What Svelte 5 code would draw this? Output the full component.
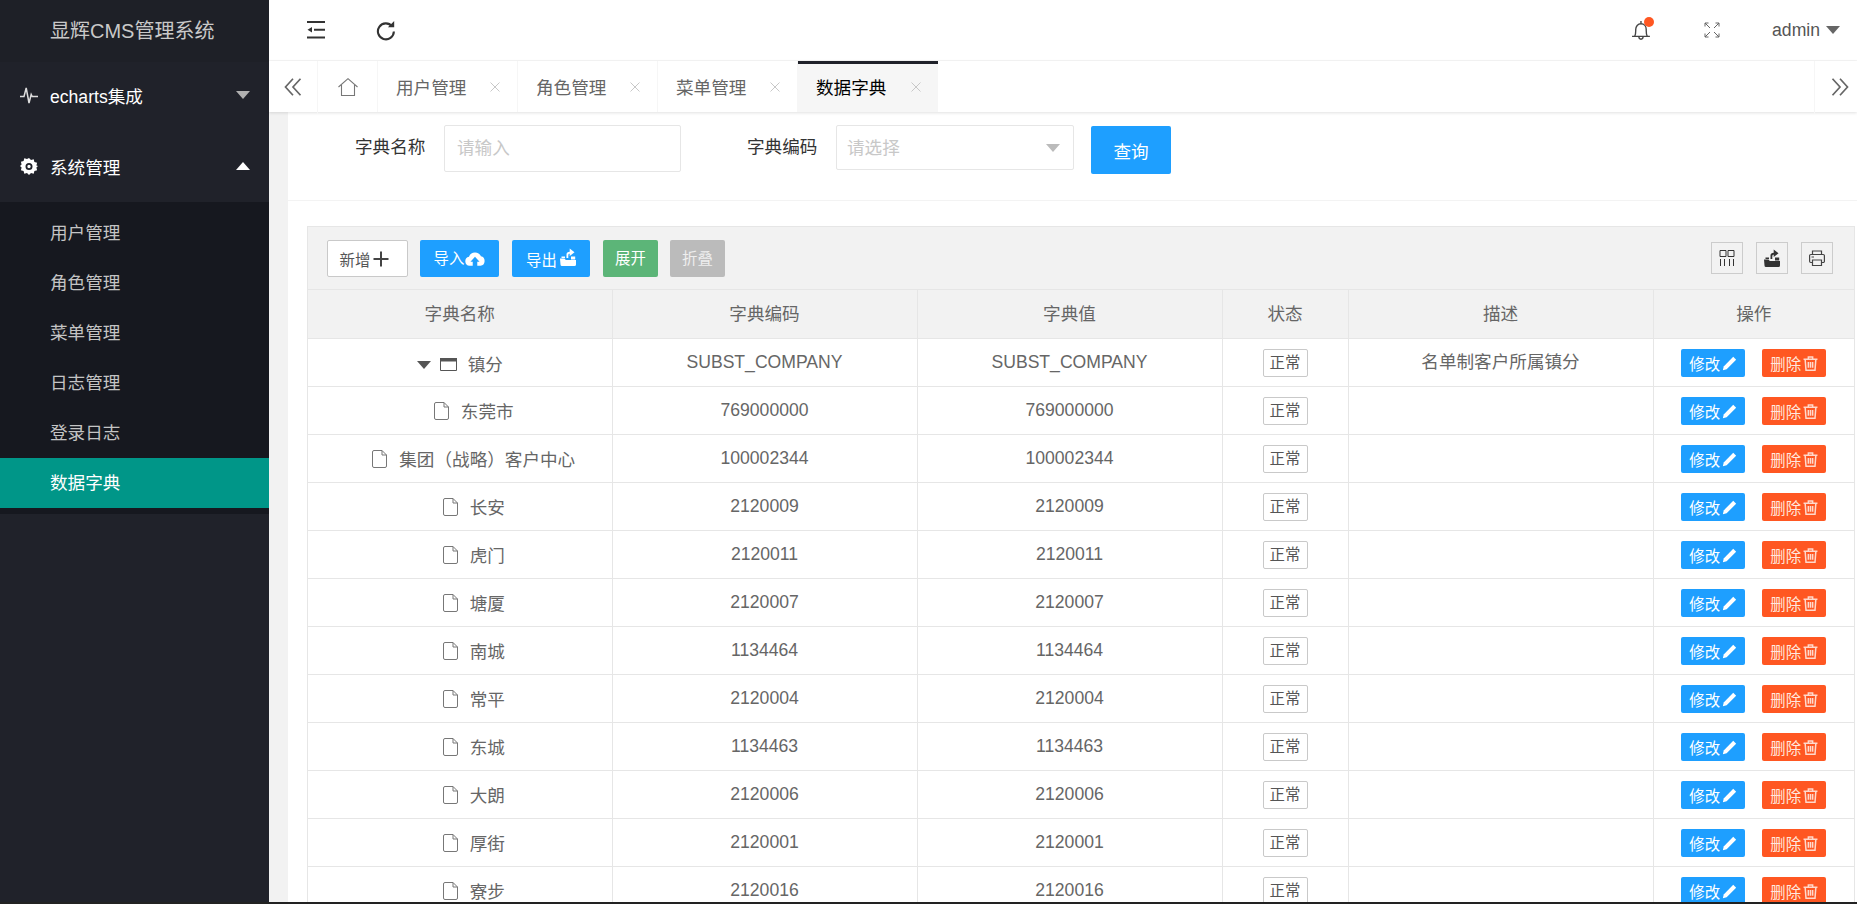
<script>
  const subs = ['用户管理', '角色管理', '菜单管理', '日志管理', '登录日志', '数据字典'];
  const tabs = ['用户管理', '角色管理', '菜单管理', '数据字典'];
  const cols = [304, 305, 305, 126, 305, 201];
  const heads = ['字典名称', '字典编码', '字典值', '状态', '描述', '操作'];
  const rows = [
    ['镇分', 'SUBST_COMPANY', '名单制客户所属镇分', true],
    ['东莞市', '769000000', ''],
    ['集团（战略）客户中心', '100002344', ''],
    ['长安', '2120009', ''],
    ['虎门', '2120011', ''],
    ['塘厦', '2120007', ''],
    ['南城', '1134464', ''],
    ['常平', '2120004', ''],
    ['东城', '1134463', ''],
    ['大朗', '2120006', ''],
    ['厚街', '2120001', ''],
    ['寮步', '2120016', '']
  ];
</script>

{#snippet ship(cls)}
  <svg class={cls} viewBox="0 0 16 18" fill="currentColor">
    <path d="M0 10.500h4.500l1.300 1.500H16v4.500a1.500 1.500 0 0 1-1.500 1.500H2a1.500 1.500 0 0 1-1.500-1.500z" />
    <path d="M6.500 10V6.500C6.500 4.600 7.800 3.800 9.700 3.800V.5l4.800 3.800-4.800 3.800V5.800C8.900 5.800 8.300 6.200 8.300 7.500V10z" />
    <path d="M11 8.500h4.200V11.500H11zM1.500 8.500h3.500v1.500H1.500z" />
  </svg>
{/snippet}

{#snippet chevrons(flip)}
  <svg class="chev" class:flip viewBox="0 0 18 18" fill="none" stroke="#666" stroke-width="1.700">
    <path d="M9 .800 1.500 9 9 17.200M16.500 .800 9 9l7.500 8.200" />
  </svg>
{/snippet}

<div class="page">
  <div class="shell">
    <aside class="side">
      <div class="logo">显辉CMS管理系统</div>
      <div class="nav first">
        <svg class="nicon" viewBox="0 0 18 18" fill="none" stroke="#ddd" stroke-width="1.500">
          <path d="M0 10.500h4L6.200 2 9 17l2.200-8.500 1 2H18" />
        </svg>
        <span class="ntext">echarts集成</span>
        <i class="tri down dim"></i>
      </div>
      <div class="nav second">
        <svg class="nicon" viewBox="0 0 18 18">
          <path fill="#fff" fill-rule="evenodd" d="M9 1l2 2 2.700-.7.700 2.700 2.700.8-.7 2.700L18 9l-1.600 1.500.7 2.700-2.700.8-.7 2.700-2.700-.7L9 18l-2-2-2.700.7-.7-2.700-2.700-.8.7-2.700L0 9l1.600-1.500-.7-2.700 2.700-.8.7-2.700 2.700.7zM9 6a3.500 3.500 0 1 0 0 7 3.500 3.500 0 0 0 0-7zm0 1.800a1.700 1.700 0 1 1 0 3.400 1.700 1.700 0 0 1 0-3.400z" />
        </svg>
        <span class="ntext">系统管理</span>
        <i class="tri up"></i>
      </div>
      <div class="sub">
        {#each subs as s, i}
          <div class="subitem" class:on={i === 5}>{s}</div>
        {/each}
      </div>
    </aside>

    <main class="main">
      <header class="top">
        <svg class="hicon" viewBox="0 0 20 18" fill="#333">
          <path d="M1 0h18v2H1zM1 15.500h18v2H1zM8 7.800h11v2H8zM1.500 8.800 6 6v5.600z" />
        </svg>
        <svg class="hicon refresh" viewBox="0 0 20 20" fill="none" stroke="#333" stroke-width="2">
          <path d="M15.800 6A7.600 7.600 0 1 0 17.500 11" />
          <path d="M17.800 1v6h-6z" fill="#333" stroke="none" />
        </svg>
        <div class="grow"></div>
        <span class="bell">
          <svg viewBox="0 0 20 20" fill="none" stroke="#444" stroke-width="1.300">
            <path d="M1 16.500h17M3.500 16.500c1.200-2 1-4 1-6.500 0-3 2-5.500 5-5.500s5 2.500 5 5.500c0 2.500-.2 4.500 1 6.500M7.500 17c0 3 4 3 4 0M9.500 2v2.500" />
          </svg>
          <i class="dot"></i>
        </span>
        <svg class="full" viewBox="0 0 16 16" fill="none" stroke="#666" stroke-width="1">
          <path d="M6 6 1 1M1 4.500V1h3.500M10 6l5-5M11.500 1H15v3.500M6 10l-5 5M1 11.500V15h3.500M10 10l5 5M15 11.500V15h-3.500" />
        </svg>
        <span class="user">admin</span>
        <i class="tri down user-tri"></i>
      </header>

      <nav class="tabs">
        <div class="scroll left">{@render chevrons(false)}</div>
        <div class="homecell">
          <svg class="home" viewBox="0 0 20 18" fill="none" stroke="#777" stroke-width="1.100">
            <path d="M.5 9 10 .7 19.500 9M3.500 7v10.500h13V7" />
          </svg>
        </div>
        {#each tabs as t, i}
          <div class="tab" class:act={i === 3}>
            <span>{t}</span>
            <svg class="x" viewBox="0 0 10 10" stroke="#c8c8c8" stroke-width="1"><path d="M.5.500l9 9M9.500.500l-9 9" /></svg>
          </div>
        {/each}
        <div class="grow"></div>
        <div class="scroll right">{@render chevrons(true)}</div>
      </nav>

      <section class="content">
        <div class="panel">
          <div class="form">
            <label class="lab lab1" for="dict-name">字典名称</label>
            <input id="dict-name" class="inp" placeholder="请输入" />
            <span class="lab lab2">字典编码</span>
            <div class="sel"><span>请选择</span><i class="tri down sel-tri"></i></div>
            <button class="query">查询</button>
          </div>

          <div class="grid">
            <div class="bar">
              <button class="btn plain">新增
                <svg class="plus" viewBox="0 0 16 16" fill="#444"><path d="M7 .500h2v15H7zM.5 7h15v2H.5z" /></svg>
              </button>
              <button class="btn blue up2">导入
                <svg class="cloud" viewBox="0 0 22 16" fill="#fff"><path fill-rule="evenodd" d="M5 16a5 5 0 0 1-.6-9.900A7 7 0 0 1 17.500 5.600 5.300 5.300 0 0 1 17 16h-3.500v-4.500H16L11 6l-5 5.500h2.500V16z" /></svg>
              </button>
              <button class="btn blue dn2">导出{@render ship('ship')}</button>
              <button class="btn green up2">展开</button>
              <button class="btn gray up2">折叠</button>
              <div class="grow"></div>
              <div class="tool">
                <svg viewBox="0 0 16 16" fill="none" stroke="#333" stroke-width="1">
                  <path d="M1 .500h6v6H1zM9 .500h6v6H9zM1.500 9v7M5.500 9v7M10.500 9v7M14.500 9v7" />
                </svg>
              </div>
              <div class="tool dark">{@render ship('toolship')}</div>
              <div class="tool">
                <svg viewBox="0 0 16 16" fill="none" stroke="#444" stroke-width="1.200">
                  <path d="M3.500 4.500V1h9v3.500M3.500 12.500H1.800A1.200 1.200 0 0 1 .6 11.300V5.700a1.200 1.200 0 0 1 1.200-1.200h12.400a1.200 1.200 0 0 1 1.200 1.200v5.600a1.200 1.200 0 0 1-1.200 1.200h-1.700M3.500 10h9v5.500h-9zM2.500 7H5" />
                </svg>
              </div>
            </div>

            <table>
              <colgroup>
                {#each cols as c}<col style="width:{c}px" />{/each}
              </colgroup>
              <thead>
                <tr>{#each heads as h}<th><span class="txt">{h}</span></th>{/each}</tr>
              </thead>
              <tbody>
                {#each rows as r}
                  <tr>
                    <td>
                      <span class="tree" class:leaf={!r[3]}>
                        {#if r[3]}
                          <i class="tri down tree-tri"></i>
                          <svg class="win" viewBox="0 0 17 13" fill="none" stroke="#555" stroke-width="1">
                            <path d="M.5.500h16v12H.5z" /><path d="M0 0h17v3.500H0z" fill="#555" stroke="none" />
                          </svg>
                        {:else}
                          <svg class="file" viewBox="0 0 15 18" fill="none" stroke="#777" stroke-width="1">
                            <path d="M2 .500h8L14.500 5v11a1.500 1.500 0 0 1-1.500 1.500H2A1.500 1.500 0 0 1 .5 16V2A1.500 1.500 0 0 1 2 .500zM10 .500V5h4.500" />
                          </svg>
                        {/if}
                        <span class="tname">{r[0]}</span>
                      </span>
                    </td>
                    <td><span class="txt">{r[1]}</span></td>
                    <td><span class="txt">{r[1]}</span></td>
                    <td><span class="stat">正常</span></td>
                    <td><span class="txt">{r[2]}</span></td>
                    <td>
                      <span class="ops">
                        <button class="op blue">修改
                          <svg class="pen" viewBox="0 0 14 14" fill="#fff"><path d="M10.500.800l2.700 2.700L4.300 12.400 0.800 13.200l.8-3.500z" /></svg>
                        </button>
                        <button class="op red">删除
                          <svg class="trash" viewBox="0 0 14 14" fill="none" stroke="#ffd9cc" stroke-width="1.400">
                            <path d="M.5 3h13M5 3V1h4v2M2 3l.8 10.300h8.400L12 3M5 5.500V11M7 5.500V11M9 5.500V11" />
                          </svg>
                        </button>
                      </span>
                    </td>
                  </tr>
                {/each}
              </tbody>
            </table>
          </div>
        </div>
      </section>
    </main>
  </div>
  <div class="strip"></div>
</div>

<style>
  :global(body) { margin: 0; background: #fff; }
  .page {
    width: 1857px; height: 904px; overflow: hidden;
    display: flex; flex-direction: column;
    font-family: "Liberation Sans", "Noto Sans CJK SC", sans-serif;
    font-size: 17.6px; color: #666;
  }
  .shell { display: flex; height: 902px; overflow: hidden; }
  .strip { height: 2px; background: #222; }
  .grow { flex: 1; }
  i { display: block; font-style: normal; }
  button { font-family: inherit; border: 0; padding: 0; cursor: pointer; }

  .tri { width: 0; height: 0; border-left: 7.500px solid transparent; border-right: 7.500px solid transparent; }
  .tri.down { border-top: 8px solid #666; }
  .tri.up { border-bottom: 8px solid #fff; }
  .tri.dim { border-top-color: #b0b0b0; }

  .side { width: 269px; flex: none; background: #20222a; color: #ddd; }
  .logo { height: 62px; box-sizing: border-box; padding-left: 50px; line-height: 62px; font-size: 20px; color: #c9c9c9; background: #1e2027; }
  .nav { height: 70px; display: flex; align-items: center; padding: 0 19px 0 20px; box-sizing: border-box; color: #fff; }
  .nav.first { padding-bottom: 4px; }
  .nav.second { padding-bottom: 2px; }
  .nicon { width: 18px; height: 18px; flex: none; margin-right: 12px; }
  .ntext { flex: 1; font-size: 17.600px; }
  .sub { background: #16181f; padding: 6px 0; }
  .subitem { height: 50px; line-height: 50px; padding-left: 50px; color: #c4c4c4; }
  .subitem.on { background: #009688; color: #fff; }

  .main { flex: 1; min-width: 0; display: flex; flex-direction: column; }
  .top { height: 61px; flex: none; box-sizing: border-box; border-bottom: 1px solid #f6f6f6; display: flex; align-items: center; color: #555; }
  .hicon { width: 20px; height: 18px; margin-left: 37px; flex: none; }
  .refresh { width: 22px; height: 21px; margin-left: 49px; }
  .bell { position: relative; width: 21px; height: 21px; margin-right: 52px; margin-top: -1px; }
  .bell svg { width: 21px; height: 21px; display: block; }
  .dot { position: absolute; left: 13px; top: -2px; width: 10px; height: 10px; border-radius: 50%; background: #ff5722; }
  .full { width: 16px; height: 16px; flex: none; margin-right: 52px; }
  .user { font-size: 17.600px; color: #555; margin-right: 6px; }
  .user-tri { margin-right: 17px; }

  .tabs { height: 51px; flex: none; display: flex; position: relative; background: #fff; box-shadow: 0 1px 3px rgba(0,0,0,.12); z-index: 1; box-sizing: border-box; }
  .scroll { display: flex; align-items: center; justify-content: center; height: 100%; }
  .scroll.left { width: 48px; border-right: 1px solid #f6f6f6; padding-bottom: 2px; box-sizing: content-box; }
  .scroll.right { width: 34px; padding-left: 8px; border-left: 1px solid #f6f6f6; padding-bottom: 2px; }
  .chev { width: 18px; height: 18px; display: block; }
  .chev.flip { transform: scaleX(-1); }
  .homecell { width: 59px; border-right: 1px solid #f6f6f6; display: flex; align-items: center; justify-content: center; }
  .home { width: 20px; height: 18px; }
  .tab { width: 140px; box-sizing: border-box; border-right: 1px solid #f6f6f6; display: flex; align-items: center; justify-content: space-between; padding: 0 17px 0 18px; color: #666; }
  .tab.act { background: #f6f6f6; color: #000; border-top: 3px solid #20222a; border-right: 0; padding-bottom: 3px; }
  .x { width: 10px; height: 10px; flex: none; }

  .content { flex: 1; min-height: 0; background: #f2f2f2; padding-left: 19px; overflow: hidden; }
  .panel { background: #fff; height: 100%; }
  .form { height: 89px; box-sizing: border-box; padding-top: 13px; border-bottom: 1px solid #f3f3f3; display: flex; align-items: flex-start; }
  .lab { color: #333; line-height: 44px; flex: none; width: 71px; }
  .lab1 { margin-left: 67px; margin-right: 18px; }
  .lab2 { margin-left: 66px; margin-right: 18px; }
  .inp { width: 237px; height: 47px; box-sizing: border-box; border: 1px solid #e6e6e6; border-radius: 2px; padding: 0 12px; font: inherit; background: #fff; outline: none; }
  .inp::placeholder { color: #c8c8c8; }
  .sel { width: 238px; height: 45px; box-sizing: border-box; border: 1px solid #e6e6e6; border-radius: 2px; padding: 0 13px 0 10px; display: flex; align-items: center; justify-content: space-between; color: #c8c8c8; }
  .sel span { margin-top: -2px; }
  .tri.sel-tri { border-top-color: #bbb; }
  .query { width: 80px; height: 48px; margin-left: 17px; margin-top: 1px; background: #1e9fff; color: #fff; font-size: 17.600px; border-radius: 2px; }

  .grid { margin: 25px 2px 0 19px; border: 1px solid #e6e6e6; border-bottom: 0; width: 1546px; }
  .bar { height: 63px; box-sizing: border-box; background: #f2f2f2; padding: 13px 0 0 19px; display: flex; align-items: flex-start; border-bottom: 1px solid #e6e6e6; }
  .btn { height: 37px; display: inline-flex; align-items: center; justify-content: center; gap: 1px; font-size: 15.400px; color: #fff; border-radius: 2px; margin-right: 13px; box-sizing: border-box; }
  .plain { width: 81px; background: #fff; color: #555; border: 1px solid #c9c9c9; margin-right: 12px; padding-right: 6px; }
  .blue { background: #1e9fff; }
  .up2 { padding-bottom: 3px; }
  .dn2 { padding-top: 1px; }
  .bar .blue:nth-of-type(2) { width: 79px; }
  .bar .blue:nth-of-type(3) { width: 78px; }
  .green { width: 55px; background: #5cb578; }
  .gray { width: 55px; background: #bbb; color: #eee; margin-left: -1px; }
  .plus { width: 16px; height: 16px; margin-left: 2px; }
  .cloud { width: 20px; height: 15px; margin-top: 3px; }
  .ship { width: 16px; height: 18px; margin-top: -5px; margin-left: 2px; }
  .tool { width: 32px; height: 32px; box-sizing: border-box; border: 1px solid #ccc; margin: 2px 13px 0 0; display: flex; align-items: center; justify-content: center; }
  .tool:last-child { margin-right: 21px; }
  .tool svg { width: 16px; height: 16px; display: block; }
  .tool.dark svg { height: 18px; }
  .tool.dark { color: #333; }

  table { border-collapse: collapse; table-layout: fixed; width: 1546px; }
  th, td { height: 48px; padding: 0; box-sizing: border-box; text-align: center; border: 1px solid #e6e6e6; font-weight: 400; color: #666; line-height: 1; }
  tr > :first-child { border-left: 0; }
  tr > :last-child { border-right: 0; }
  thead tr:first-child th { border-top: 0; }
  th { background: #f2f2f2; }
  .txt { display: inline-block; padding-top: 2px; }
  .tree { display: inline-flex; align-items: center; padding-top: 8px; }
  .tree.leaf { padding-left: 28px; }
  .tri.tree-tri { border-left-width: 7px; border-right-width: 7px; border-top-color: #555; margin-right: 9px; margin-top: -3px; }
  .win { width: 17px; height: 13px; margin-right: 11px; flex: none; margin-top: -3px; }
  .file { width: 15px; height: 18px; margin-right: 12px; flex: none; margin-top: -3px; }
  .stat { display: inline-block; width: 45px; height: 28px; box-sizing: border-box; line-height: 26px; border: 1px solid #c9c9c9; border-radius: 2px; font-size: 15.400px; color: #555; vertical-align: middle; margin-top: 2px; }
  .ops { display: inline-flex; gap: 17px; vertical-align: middle; margin-top: 2px; }
  .op { width: 64px; height: 28px; display: inline-flex; align-items: center; justify-content: center; gap: 2px; font-size: 15.400px; color: #fff; border-radius: 2px; }
  .red { background: #ff5722; color: #ffe8df; }
  .pen { width: 15px; height: 15px; }
  .trash { width: 15px; height: 15px; }
</style>
